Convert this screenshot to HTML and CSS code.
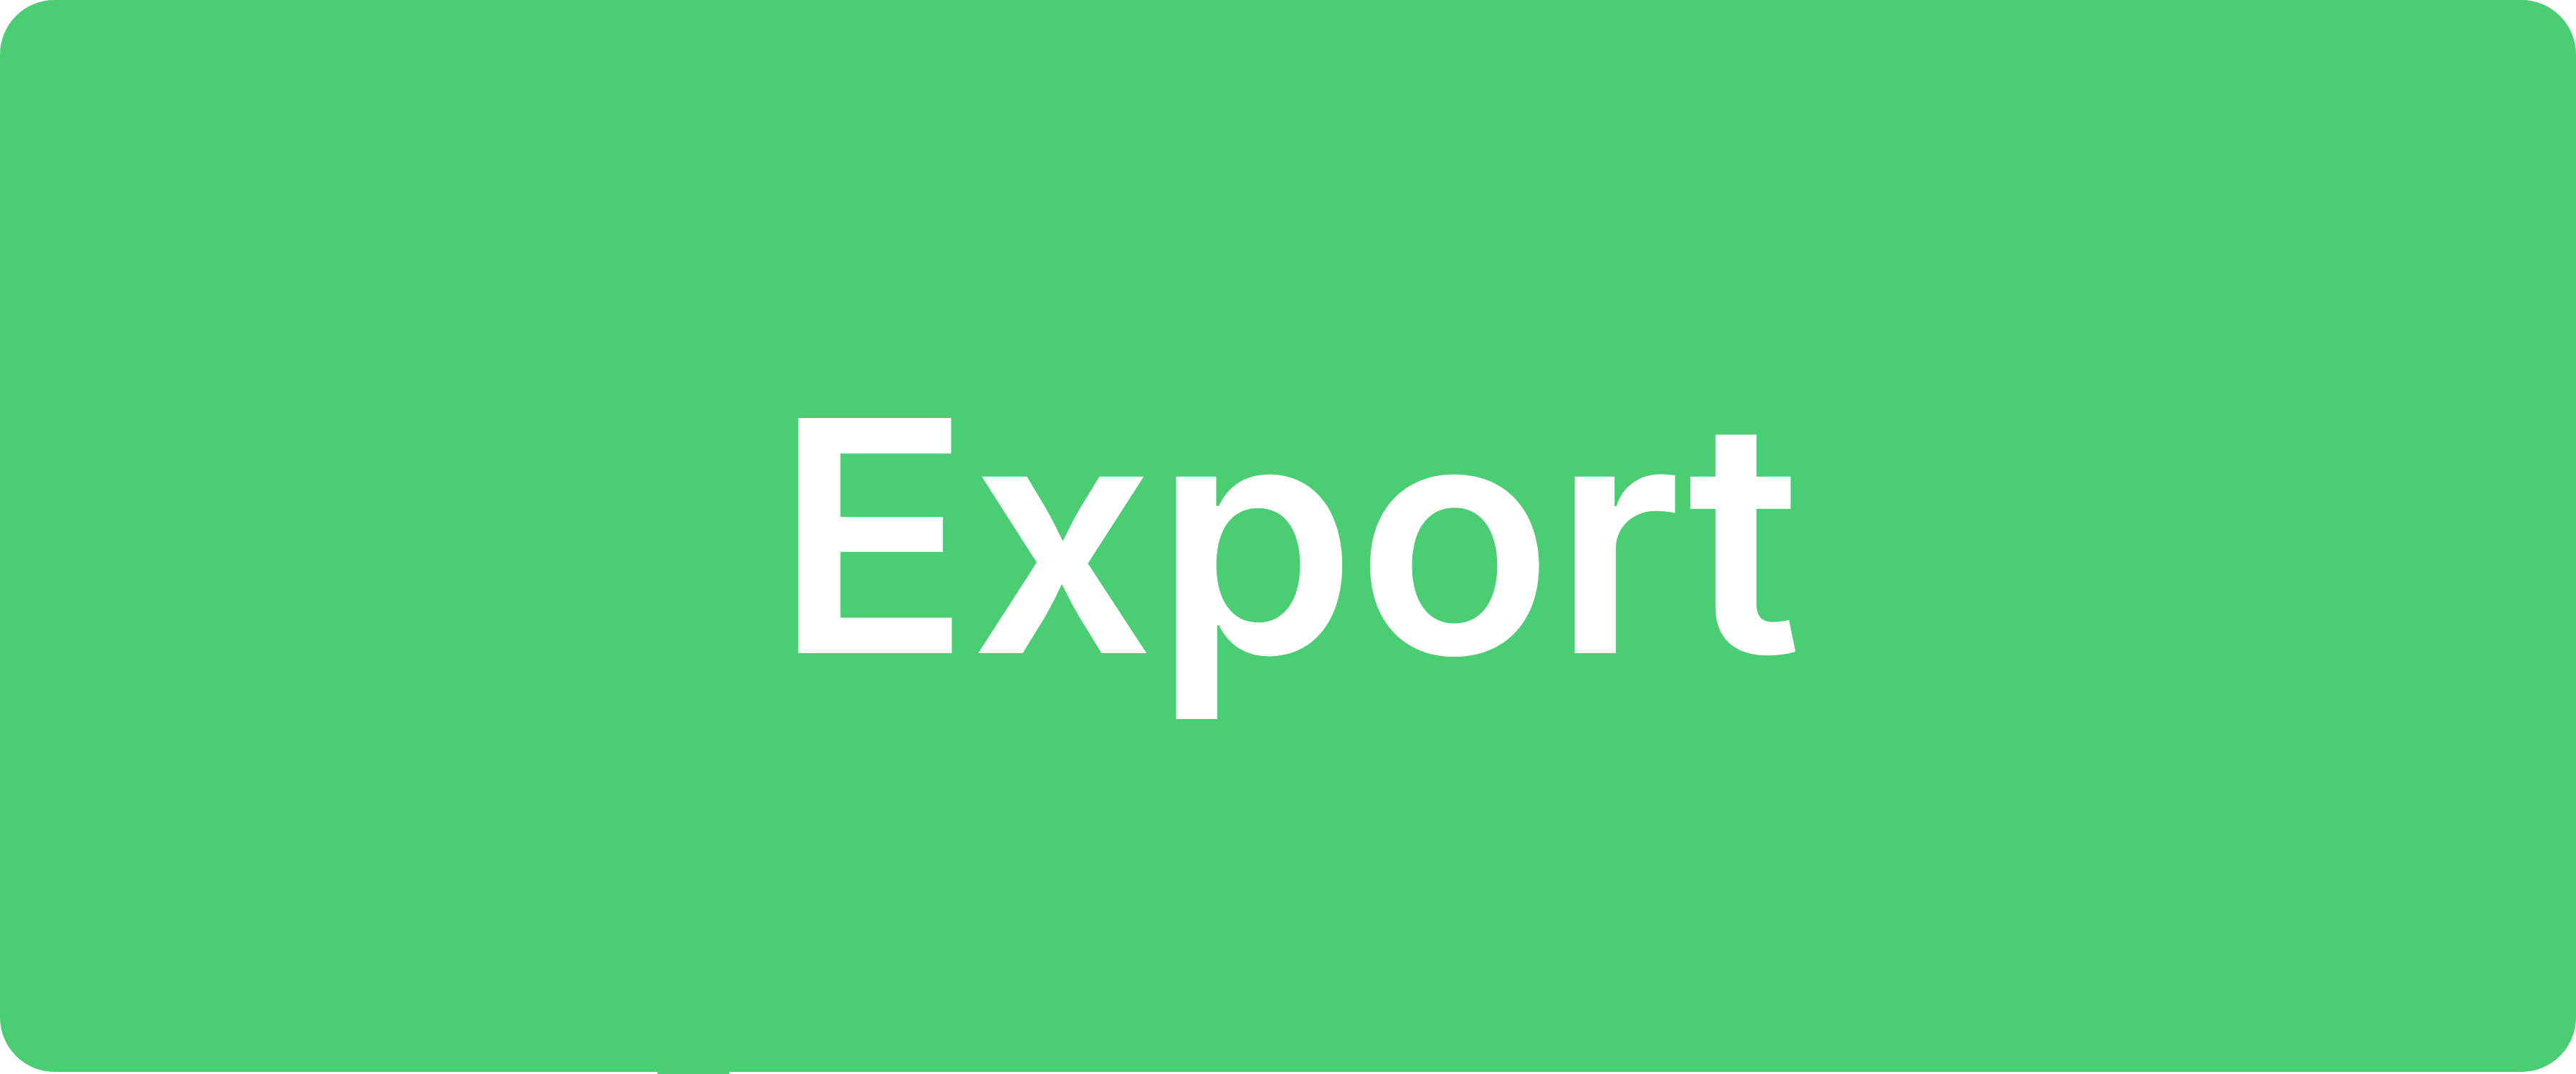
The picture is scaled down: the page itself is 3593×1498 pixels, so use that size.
FILE: index.html
```html
<!DOCTYPE html>
<html lang="en">

<head>
    <meta charset="UTF-8">
    <meta name="viewport" content="width=device-width, initial-scale=1.0">
    <title>Export</title>
    <link rel="stylesheet" href="styles.css">
</head>

<body>
    <div class="wrap">
        <button class="export-btn" type="button">Export</button>
        <span class="btn-tab"></span>
    </div>
</body>

</html>
```
FILE: styles.css
```css
* {
    margin: 0;
    padding: 0;
    box-sizing: border-box;
}

body {
    background-color: #fff;
    height: 100vh;
    overflow: hidden;
}

.wrap {
    position: relative;
    width: 100%;
}

.export-btn {
    display: flex;
    justify-content: center;
    align-items: center;
    width: 100%;
    height: 1495px;
    border: none;
    border-radius: 76px;
    background-color: #4bce73;
    color: #fff;
    font-family: Inter, "Noto Sans", sans-serif;
    font-weight: 600;
    font-size: 451px;
    line-height: 1;
    cursor: pointer;
}

/* small notch that hangs under the button */
.btn-tab {
    position: absolute;
    left: 917px;
    top: 1495px;
    width: 100px;
    height: 3px;
    background-color: #4bce73;
}
```
